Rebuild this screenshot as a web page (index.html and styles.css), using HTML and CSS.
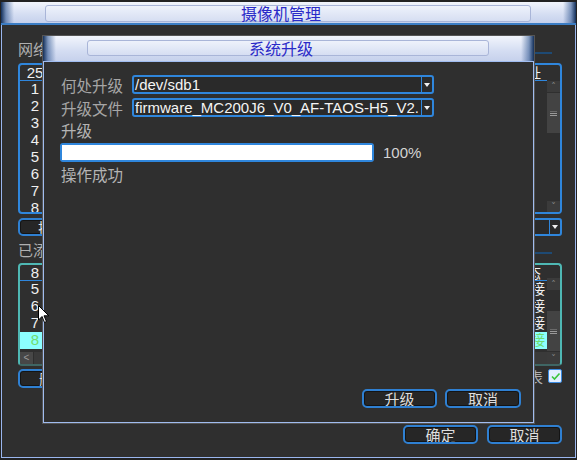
FILE: index.html
```html
<!DOCTYPE html>
<html>
<head>
<meta charset="utf-8">
<link rel="stylesheet" href="styles.css">
</head>
<body>
<div class="win">
  <div class="titlebar"><div class="titlebox">摄像机管理</div></div>
  <div class="tline"></div>
  <div class="winbody">
    <div class="section"><span class="seclabel">网络设备</span><span class="secline"></span></div>
    <div class="list list1">
      <div class="lmain">
        <div class="lhead"><span class="c1">25</span><span class="cfill"></span><span class="cend">地址</span></div>
        <div class="lrows">
          <div class="lrow"><span class="c1">1</span></div>
          <div class="lrow"><span class="c1">2</span></div>
          <div class="lrow"><span class="c1">3</span></div>
          <div class="lrow"><span class="c1">4</span></div>
          <div class="lrow"><span class="c1">5</span></div>
          <div class="lrow"><span class="c1">6</span></div>
          <div class="lrow"><span class="c1">7</span></div>
          <div class="lrow"><span class="c1">8</span></div>
        </div>
      </div>
      <div class="vscroll vs1">
        <div class="vsp"></div>
        <div class="sbtn">&#708;</div>
        <div class="thumb t1"><span class="grip"></span></div>
        <div class="track"></div>
        <div class="sbtn">&#709;</div>
      </div>
    </div>
    <div class="row2">
      <div class="btn wbtn">搜索</div>
      <div class="spacer"></div>
      <div class="combo small"><span class="ctext"></span><span class="carrow"><span class="tri"></span></span></div>
    </div>
    <div class="section sec2"><span class="seclabel">已添加设备</span><span class="secline"></span></div>
    <div class="list list2">
      <div class="lmain">
        <div class="lhead"><span class="c1">8</span><span class="cfill"></span><span class="cend">状态</span></div>
        <div class="lrows">
          <div class="lrow"><span class="c1">5</span><span class="cfill"></span><span class="cend">连接</span></div>
          <div class="lrow"><span class="c1">6</span><span class="cfill"></span><span class="cend">连接</span></div>
          <div class="lrow"><span class="c1">7</span><span class="cfill"></span><span class="cend">连接</span></div>
          <div class="lrow sel"><span class="c1">8</span><span class="cfill"></span><span class="cend">连接</span></div>
        </div>
        <div class="hscroll"><span class="hbtn">&lt;</span><span class="htrack"></span></div>
      </div>
      <div class="vscroll vs2">
        <div class="vsp2"></div>
        <div class="sbtn">&#708;</div>
        <div class="track short"></div>
        <div class="thumb t2"><span class="grip"></span></div>
        <div class="sbtn">&#709;</div>
      </div>
    </div>
    <div class="row3">
      <div class="btn wbtn">删除</div>
      <div class="spacer"></div>
      <span class="chklabel">显示列表</span>
      <span class="chk"><svg width="11" height="10" viewBox="0 0 11 10"><path d="M2 5.5 L4.5 8 L9.5 2.5" fill="none" stroke="#3cc43c" stroke-width="1.6"/></svg></span>
    </div>
    <div class="bottom">
      <div class="btn">确定</div>
      <div class="btn">取消</div>
    </div>
  </div>
</div>

<div class="dialog">
  <div class="dtitle"><div class="titlebox dbox">系统升级</div></div>
  <div class="dbody">
    <div class="frow">
      <span class="flabel">何处升级</span>
      <div class="combo"><span class="ctext">/dev/sdb1</span><span class="carrow"><span class="tri"></span></span></div>
    </div>
    <div class="frow">
      <span class="flabel">升级文件</span>
      <div class="combo"><span class="ctext">firmware_MC200J6_V0_AF-TAOS-H5_V2.</span><span class="carrow"><span class="tri"></span></span></div>
    </div>
    <div class="plabel">升级</div>
    <div class="prow">
      <div class="pbar"><div class="pfill" style="width:100%"></div></div>
      <span class="ptext">100%</span>
    </div>
    <div class="plabel status">操作成功</div>
    <div class="dbtns">
      <div class="btn">升级</div>
      <div class="btn">取消</div>
    </div>
  </div>
</div>

<svg class="cursor" width="12" height="19" viewBox="0 0 12 19"><path d="M0.5 0.5 L0.5 15 L4 11.5 L6.5 17.5 L8.5 16.5 L6 10.8 L10.8 10.8 Z" fill="#ffffff" stroke="#000000" stroke-width="1"/></svg>
</body>
</html>
```

FILE: styles.css
```css
* { box-sizing: border-box; }
html, body { margin: 0; padding: 0; }
body {
  background: #222222;
  width: 577px;
  height: 460px;
  overflow: hidden;
  position: relative;
  font-family: "Noto Sans CJK SC", "Liberation Sans", sans-serif;
  color: #b4b4b4;
}
.win {
  margin: 2px 0 0 1px;
  width: 575px;
  height: 456px;
  display: flex;
  flex-direction: column;
}
.titlebar {
  height: 21px;
  flex: none;
  display: flex;
  align-items: center;
  padding: 1px 45px 0 44px;
  background:
    linear-gradient(to right, #14305a 0, rgba(40,80,140,0.55) 5px, rgba(200,212,240,0) 13px, rgba(200,212,240,0) calc(100% - 13px), rgba(40,80,140,0.55) calc(100% - 5px), #14305a 100%),
    linear-gradient(#f2f5fc, #d4ddf2 60%, #c6d1ec);
}
.titlebox {
  flex: 1;
  height: 17px;
  border: 1px solid #a9b5d8;
  border-radius: 3px;
  background: linear-gradient(#eef2fb, #d6def2);
  display: flex;
  align-items: center;
  justify-content: center;
  padding-right: 14px;
  font-size: 16px;
  line-height: 16px;
  color: #2a2ac8;
}
.tline { height: 2px; flex: none; background: #3b7dc4; }
.winbody {
  flex: 1;
  background: #2f2f2f;
  border: 1px solid #9ab6ee;
  border-top: none;
  display: flex;
  flex-direction: column;
  padding: 15px 13px 13px 16px;
}
.section { height: 17px; display: flex; flex: none; }
.seclabel { font-size: 15px; line-height: 17px; color: #b0b0b0; }
.secline {
  flex: 1;
  height: 2px;
  margin: 12px 10px 0 6px;
  background: #1e4a74;
}
.sec2 { margin-top: 5px; }
.sec2 .secline { margin-top: 11px; }

.list {
  display: flex;
  flex: none;
  border: 2px solid #2f86dc;
  border-radius: 4px;
  overflow: hidden;
}
.list1 { margin-top: 6px; height: 151px; }
.list2 { margin-top: 5px; height: 103px; border-color: #4fb8b4; border-bottom-color: #3f6664; }
.lmain { flex: 1; display: flex; flex-direction: column; min-width: 0; }
.lhead {
  height: 16px;
  flex: none;
  display: flex;
  align-items: flex-start;
  border-bottom: 1px solid #2f86dc;
  font-family: "Liberation Sans", "Noto Sans CJK SC", sans-serif;
  font-size: 15px;
  color: #f0f0f0;
}
.lrows { flex: 1; overflow: hidden; }
.lrow {
  height: 17px;
  display: flex;
  align-items: flex-start;
  font-family: "Liberation Sans", "Noto Sans CJK SC", sans-serif;
  font-size: 15px;
  color: #f0f0f0;
}
.lrow.sel { background: #8cffff; color: #70dc70; }
.c1 { width: 30px; text-align: center; line-height: 15px; }
.cfill { flex: 1; }
.cend { font-family: "Noto Sans CJK SC", sans-serif; font-size: 14px; line-height: 15px; margin-right: 2px; }
.lhead .cend { margin-right: 6px; }
.hscroll { height: 12px; flex: none; display: flex; background: #3a3a3a; }
.hbtn {
  width: 14px;
  background: #474747;
  border-right: 1px solid #2e2e2e;
  color: #9a9a9a;
  font-family: "Liberation Sans", sans-serif;
  font-size: 10px;
  line-height: 12px;
  text-align: center;
}
.htrack { flex: 1; }

.vscroll { width: 13px; flex: none; display: flex; flex-direction: column; }
.vsp { height: 16px; flex: none; }
.vsp2 { height: 13px; flex: none; }
.sbtn {
  height: 11px;
  flex: none;
  background: #3b3b3b;
  color: #8c8c8c;
  font-family: "DejaVu Sans", sans-serif;
  font-size: 9px;
  line-height: 11px;
  text-align: center;
}
.vs2 .sbtn { height: 12px; line-height: 12px; }
.thumb {
  flex: none;
  background: #434343;
  display: flex;
  align-items: center;
  justify-content: center;
  margin-top: 1px;
}
.t1 { height: 40px; }
.t2 { height: 40px; margin-bottom: 1px; }
.grip {
  width: 7px;
  height: 5px;
  border-top: 1px solid #6a6a6a;
  border-bottom: 1px solid #9a9a9a;
  position: relative;
}
.grip::after {
  content: "";
  position: absolute;
  left: 0; right: 0; top: 1px;
  height: 1px;
  background: #9a9a9a;
}
.track { flex: 1; }

.row2 { margin-top: 4px; height: 18px; display: flex; flex: none; }
.row3 { margin-top: 3px; height: 19px; display: flex; flex: none; align-items: flex-start; }
.spacer { flex: 1; }
.row2 .wbtn { width: 70px; height: 18px; }
.row3 .wbtn { width: 72px; }
.combo.small { width: 140px; height: 18px; }
.chklabel { font-size: 15px; line-height: 16px; color: #b0b0b0; margin-right: 5px; }
.chk {
  width: 14px;
  height: 14px;
  border: 1px solid #3a8ae0;
  border-radius: 2px;
  background: #e2eeff;
  display: flex;
  align-items: center;
  justify-content: center;
}
.bottom { margin-top: auto; display: flex; justify-content: flex-end; gap: 9px; flex: none; }

.btn {
  width: 75px;
  height: 19px;
  border: 2px solid #2f80d2;
  border-radius: 5px;
  background: #262626;
  box-shadow: inset 0 0 0 1px #141414;
  display: flex;
  align-items: center;
  justify-content: center;
  font-size: 15px;
  line-height: 15px;
  color: #dedede;
  overflow: hidden;
  white-space: nowrap;
  flex: none;
}

.combo {
  width: 302px;
  height: 19px;
  border: 2px solid #2f86dc;
  border-radius: 3px;
  background: #2a2a2a;
  display: flex;
  align-items: center;
}
.ctext {
  flex: 1;
  min-width: 0;
  overflow-x: clip;
  overflow-y: visible;
  white-space: nowrap;
  padding-left: 1px;
  font-family: "Liberation Sans", sans-serif;
  font-size: 15px;
  line-height: 15px;
  color: #f4f4f4;
}
.carrow {
  width: 11px;
  height: 100%;
  flex: none;
  border-left: 1px solid #2f86dc;
  display: flex;
  align-items: center;
  justify-content: center;
}
.tri {
  width: 0; height: 0;
  border-left: 3px solid transparent;
  border-right: 3px solid transparent;
  border-top: 4px solid #f0f0f0;
}

.dialog {
  position: absolute;
  left: 43px;
  top: 36px;
  width: 491px;
  height: 387px;
  display: flex;
  flex-direction: column;
  outline: 1px solid #555;
}
.dtitle {
  height: 25px;
  flex: none;
  display: flex;
  align-items: center;
  padding: 0 45px 1px 44px;
  background:
    linear-gradient(to right, #14305a 0, rgba(40,80,140,0.55) 5px, rgba(200,212,240,0) 13px, rgba(200,212,240,0) calc(100% - 13px), rgba(40,80,140,0.55) calc(100% - 5px), #14305a 100%),
    linear-gradient(#f2f5fc, #d4ddf2 60%, #c6d1ec);
}
.dbox { height: 16px; }
.dbody {
  flex: 1;
  background: #2f2f2f;
  border: 1px solid #a0bcf0;
  display: flex;
  flex-direction: column;
  padding: 13px 12px 14px 16px;
}
.frow { display: flex; align-items: center; height: 19px; margin-bottom: 4px; flex: none; }
.flabel { width: 72px; padding-left: 1px; font-size: 15.5px; line-height: 16px; color: #a6a6a6; }
.plabel { height: 18px; line-height: 18px; font-size: 15.5px; color: #b4b4b4; padding-left: 1px; flex: none; }
.prow { margin-top: 4px; display: flex; align-items: center; height: 19px; flex: none; }
.pbar {
  width: 314px;
  height: 19px;
  border: 2px solid #2f86dc;
  border-radius: 3px;
  background: #2a2a2a;
}
.pfill { height: 100%; background: #ffffff; }
.ptext {
  margin-left: 9px;
  font-family: "Liberation Sans", sans-serif;
  font-size: 15px;
  color: #d4d4d4;
}
.status { margin-top: 3px; }
.dbtns { margin-top: auto; display: flex; justify-content: flex-end; gap: 8px; flex: none; }
.dbtns .btn:last-child { width: 76px; }

.cursor { position: absolute; left: 38px; top: 305px; }
```
